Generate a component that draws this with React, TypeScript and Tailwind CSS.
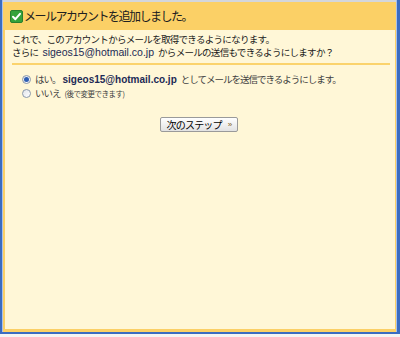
import React from "react";

const jp = { fontFamily: '"Noto Sans CJK JP", "Noto Sans", sans-serif' };
const lat = { fontFamily: '"Liberation Sans", "Noto Sans CJK JP", sans-serif' };

function CheckIcon() {
  return (
    <svg width="13" height="13" viewBox="0 0 13 13" className="shrink-0">
      <rect x="0.5" y="0.5" width="12" height="12" rx="1.5" fill="#35a23a" stroke="#2a7f2e" />
      <path d="M3 6.8 L5.4 9.2 L10 3.8" fill="none" stroke="#ffffff" strokeWidth="2" strokeLinecap="round" strokeLinejoin="round" />
    </svg>
  );
}

function Radio({ checked }: { checked?: boolean }) {
  return (
    <span className="w-[9px] h-[9px] rounded-full border border-[#8a98ab] bg-gradient-to-br from-[#dfe3ea] to-white flex items-center justify-center shrink-0">
      {checked && <span className="w-[5px] h-[5px] rounded-full bg-[#2f5fb3]" />}
    </span>
  );
}

export default function App() {
  return (
    <div className="w-[400px] h-[337px] bg-[#eef0f4] flex flex-col overflow-hidden">
      <div className="flex-1 flex flex-col border-l-2 border-r-[3px] border-b-2 border-[#3a6cc1]">
        <div className="flex-1 flex flex-col border-l border-r border-[#a9c1ea]">
          <div className="h-[2px] bg-[#d3d6dc]" />
          <div className="flex-1 flex flex-col bg-[#fbd066] pl-[2px] pr-[1px] pb-[3px]">
            <div className="h-[28px] flex items-center pl-[5px] gap-[1px]">
              <CheckIcon />
              <span className="text-[12px] tracking-[-1.5px] text-[#202020]" style={jp}>
                メールアカウントを追加しました。
              </span>
            </div>
            <div className="flex-1 bg-[#fff7d7] pl-[7px] pr-[6px] pt-[3px] flex flex-col">
              <div className="text-[9.5px] tracking-[-0.7px] text-[#1a1a1a] flex flex-col" style={jp}>
                <div className="h-[13px] leading-[13px] whitespace-nowrap">これで、このアカウントからメールを取得できるようになります。</div>
                <div className="h-[13px] leading-[13px] whitespace-nowrap flex items-center">
                  <span>さらに</span>
                  <span className="ml-[4px] mr-[4px] tracking-normal text-[10.5px] text-[#1c2a55] leading-[13px]" style={lat}>sigeos15@hotmail.co.jp</span>
                  <span>からメールの送信もできるようにしますか？</span>
                </div>
              </div>
              <div className="mt-[4px] h-[2px] bg-[#fbd36c] mr-[-1px]" />
              <div className="pl-[10px] pt-[8px] flex flex-col gap-[1px]">
                <div className="h-[13px] flex items-center gap-[4px] whitespace-nowrap">
                  <Radio checked />
                  <span className="text-[9.5px] leading-[13px] tracking-[-1px] text-[#404040]" style={jp}>はい。</span>
                  <span className="ml-[-2px] font-bold text-[10px] leading-[13px] text-[#1c2a55]" style={lat}>sigeos15@hotmail.co.jp</span>
                  <span className="text-[9.5px] leading-[13px] tracking-[-1px] text-[#404040]" style={jp}>としてメールを送信できるようにします。</span>
                </div>
                <div className="h-[13px] flex items-center gap-[4px] whitespace-nowrap">
                  <Radio />
                  <span className="text-[9.5px] leading-[13px] tracking-[-1px] text-[#404040]" style={jp}>いいえ</span>
                  <span className="text-[7.5px] leading-[13px] tracking-[-0.5px] text-[#404040]" style={jp}>(後で変更できます)</span>
                </div>
              </div>
              <div className="flex justify-center pt-[17px] pr-[3px]">
                <button
                  className="h-[15px] px-[6px] flex items-center gap-[6px] border border-[#9a9a9a] rounded-[2px] bg-gradient-to-b from-white to-[#e2e2e2] text-[10px] tracking-[-0.8px] text-black"
                  style={jp}
                >
                  次のステップ<span className="text-[8px] text-[#806020]" style={lat}>»</span>
                </button>
              </div>
            </div>
          </div>
        </div>
      </div>
      <div className="h-[3px] bg-[#f4f4f4]" />
    </div>
  );
}
